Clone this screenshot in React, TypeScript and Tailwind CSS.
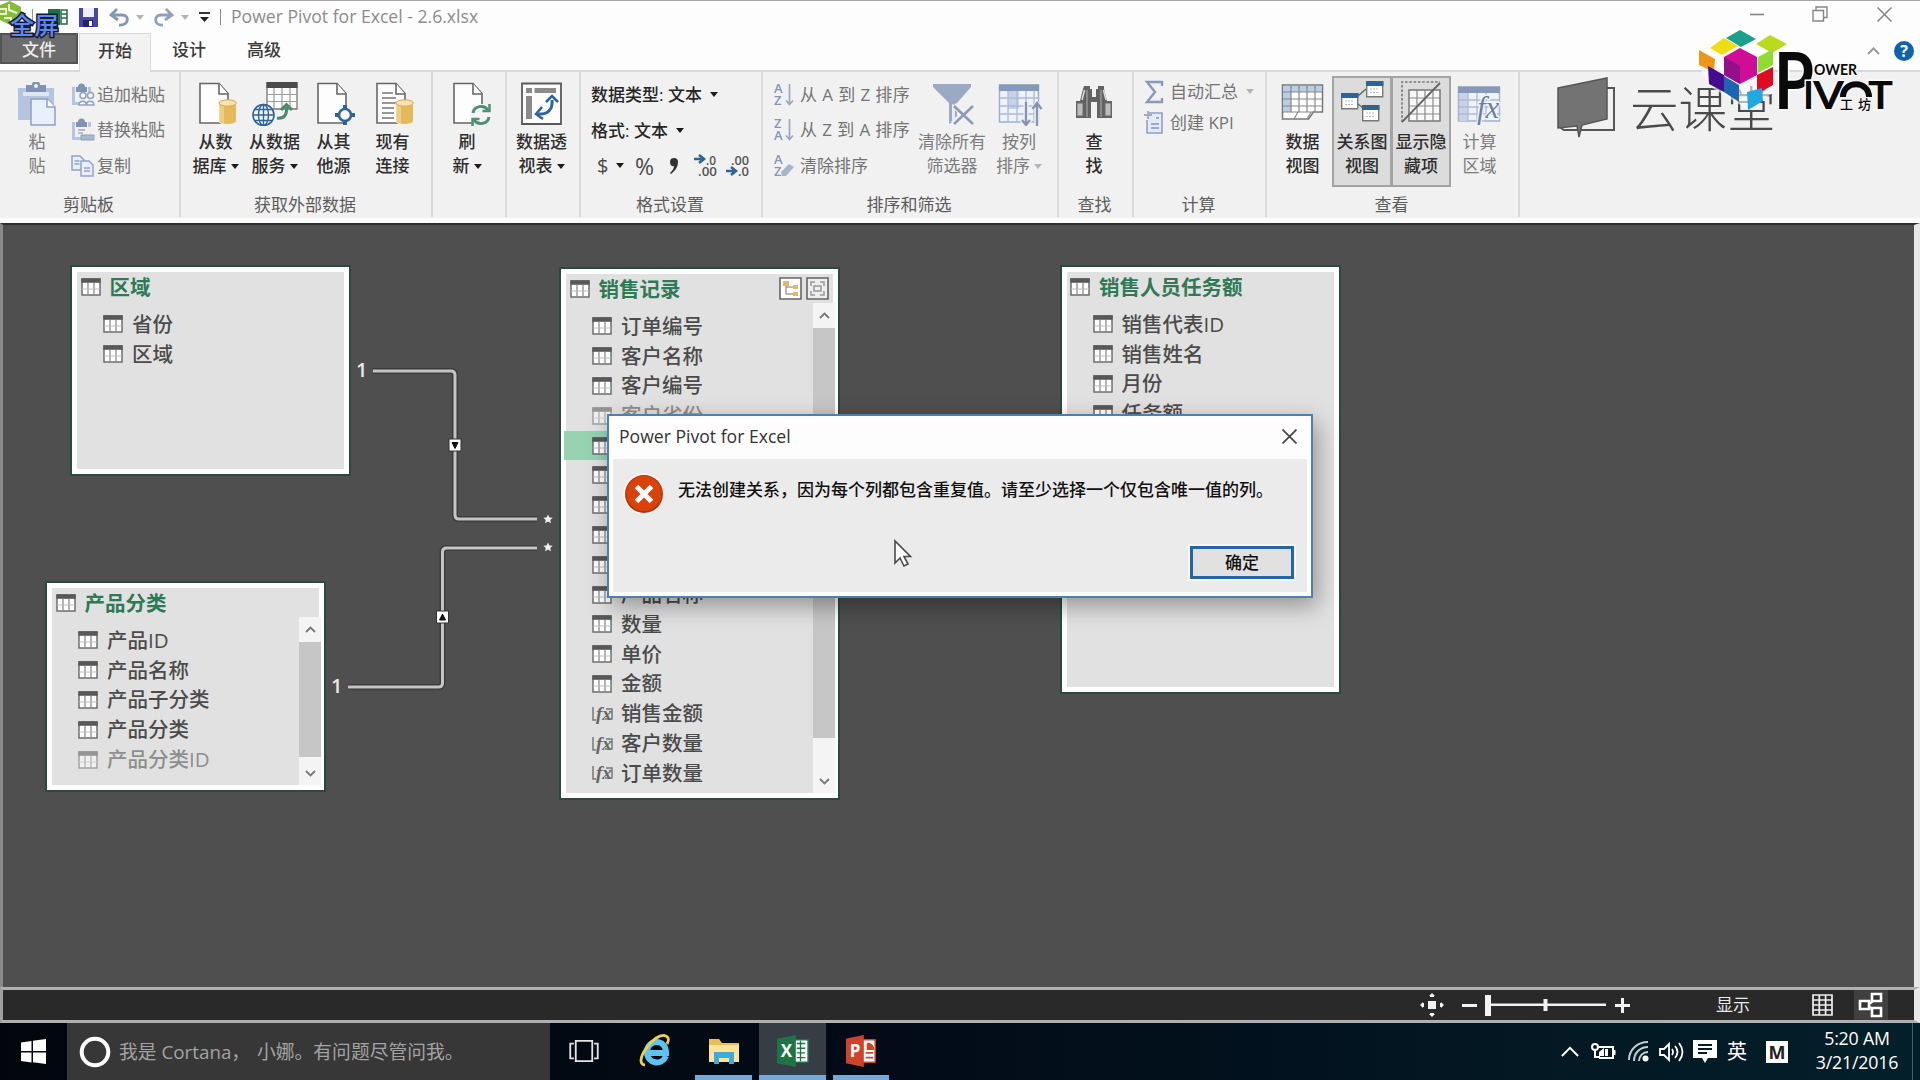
import React from 'react';

const INK = '#4a4a4a';
const BLUE = '#2f6496';

function Caret({ muted = false }: { muted?: boolean }) {
  return (
    <svg width="8" height="5" viewBox="0 0 8 5" className="shrink-0">
      <path d="M0 0h8L4 5z" fill={muted ? '#b4b4b4' : '#1c1c1c'} />
    </svg>
  );
}

/* ---------- ribbon icons ---------- */

function Page({ children, lines = false }: { children?: React.ReactNode; lines?: boolean }) {
  return (
    <svg width="40" height="44" viewBox="0 0 40 44" className="ml-[4px]">
      <path d="M2 1.500h19l9 10V41H2z" fill="#fdfdfd" stroke="#666" strokeWidth="1.600" />
      <path d="M21 1.500V12h9" fill="#fff" stroke="#666" strokeWidth="1.600" />
      {lines && <path d="M7 11h11M7 16h14M7 21h16M7 26h12M7 31h12M7 36h12" stroke="#777" strokeWidth="1.300" />}
      {children}
    </svg>
  );
}

function Cylinder() {
  return (
    <g>
      <path d="M21 21v18c0 4.600 17.500 4.600 17.500 0V21z" fill="#e5b95c" stroke="#f6f6f6" strokeWidth="1" />
      <path d="M22 22v16.500c0 1.500 2 2.600 4 3V24z" fill="#f0cd80" />
      <ellipse cx="29.700" cy="21" rx="8.700" ry="3.200" fill="#f8e3ae" stroke="#d8a94a" />
    </g>
  );
}

function PasteIcon() {
  return (
    <svg width="40" height="44" viewBox="0 0 40 44">
      <path d="M1 6h36v32H1z" fill="#b7c4dd" />
      <path d="M6 10h26v4H6z" fill="#dfe6f2" />
      <path d="M9 3h6a4 4 0 0 1 8 0h6v7H9z" fill="#8093b5" />
      <circle cx="19" cy="4" r="2" fill="#f1f1f1" />
      <path d="M14 17h16l8 8v18H14z" fill="#e8f0fb" stroke="#8da0c2" strokeWidth="1.500" />
      <path d="M30 17v8h8" fill="#fff" stroke="#8da0c2" strokeWidth="1.500" />
    </svg>
  );
}

function SmallPaste({ kind }: { kind: 'append' | 'replace' | 'copy' }) {
  if (kind === 'copy')
    return (
      <svg width="24" height="22" viewBox="0 0 24 22" fill="#e8effa" stroke="#93a4c4" strokeWidth="1.500">
        <path d="M1 1h8l4 4v10H1z" />
        <path d="M10 6h8l4 4v11H10z" />
        <path d="M3.500 6h5M3.500 9h5M13 13h6M13 16h6" />
      </svg>
    );
  return (
    <svg width="24" height="24" viewBox="0 0 24 24">
      <path d="M1 4h3v17H1zM1 19h9v3H1zM17 4h3v5h-3z" fill="#b7c4dd" />
      <path d="M5 4h2a3.500 3.500 0 0 1 7 0h2v5H5z" fill="#8093b5" />
      {kind === 'append' ? (
        <g fill="#f5f8fc" stroke="#8fa0c0" strokeWidth="1.500">
          <circle cx="12" cy="12.500" r="3" />
          <circle cx="19.500" cy="12.500" r="3" />
          <path d="M8 22c0-5 7-5 7.500 0zM15.500 22c0-5 7-5 7.500 0z" />
        </g>
      ) : (
        <g>
          <path d="M7 12h7M7 15h5" stroke="#9aaac8" strokeWidth="1.500" />
          <path d="M10 17h13v5H10z" fill="#aab8d2" stroke="#8fa0c0" />
        </g>
      )}
    </svg>
  );
}

function ServiceIcon() {
  return (
    <svg width="46" height="44" viewBox="0 0 46 44">
      <path d="M15 1h30v26H15z" fill="#fff" stroke="#777" strokeWidth="1.300" />
      <path d="M14.500 0h31v6h-31z" fill="#4b4b4b" />
      <path d="M22 6v20M30 6v20M38 6v20M15 12.500h30M15 19.500h30" stroke="#999" strokeWidth="1.200" />
      <circle cx="11.500" cy="33" r="10.500" fill="#f1f6fb" stroke={BLUE} strokeWidth="1.600" />
      <ellipse cx="11.500" cy="33" rx="5" ry="10.500" fill="none" stroke={BLUE} strokeWidth="1.400" />
      <path d="M1 33h21M11.500 23v20M3 27.500h17M3 38.500h17" stroke={BLUE} strokeWidth="1.400" />
      <path d="M25 36c8 1 10-4 9.500-11M29 28l5.500-5.500 5.500 5.500" fill="none" stroke="#4a8a6a" strokeWidth="3" />
    </svg>
  );
}

function RefreshArrows() {
  return (
    <g fill="none" stroke="#4d9272" strokeWidth="3">
      <circle cx="29" cy="33" r="11" fill="#f5f5f5" stroke="none" />
      <path d="M21 31c1-7 11-9 15-3M37 35c-1 7-11 9-15 3" />
      <path d="M37.500 22v7h-7M20.500 44v-7h7" strokeWidth="2.500" />
    </g>
  );
}

function PivotIcon() {
  return (
    <svg width="41" height="44" viewBox="0 0 41 44">
      <path d="M1 1.500h39V42H1z" fill="#fcfcfc" stroke="#5a5a5a" strokeWidth="1.800" />
      <path d="M5 6h6v5H5zM13.500 6H35v5H13.500zM5 14h6v23H5z" fill="#8a8a8a" />
      <path d="M17 32c10 1 15-5 14-14" fill="none" stroke={BLUE} strokeWidth="3" />
      <path d="M25 20l6-6 6 6M21 25l-6 7 7 5" fill="none" stroke={BLUE} strokeWidth="2.500" />
    </svg>
  );
}

function SortIcon({ top, bottom }: { top: string; bottom: string }) {
  return (
    <svg width="21" height="28" viewBox="0 0 21 28">
      <text x="0" y="12" fontSize="13" fontWeight="600" fill="#8496b5" fontFamily="Open Sans, sans-serif">{top}</text>
      <text x="0" y="24" fontSize="13" fontWeight="600" fill="#8496b5" fontFamily="Open Sans, sans-serif">{bottom}</text>
      <path d="M15.500 3v20M12 19.500l3.500 4 3.500-4" fill="none" stroke="#9aa8c0" strokeWidth="1.700" />
    </svg>
  );
}

function ClearSortIcon() {
  return (
    <svg width="21" height="28" viewBox="0 0 21 28">
      <text x="0" y="12" fontSize="13" fontWeight="600" fill="#8496b5" fontFamily="Open Sans, sans-serif">A</text>
      <text x="0" y="24" fontSize="13" fontWeight="600" fill="#8496b5" fontFamily="Open Sans, sans-serif">Z</text>
      <path d="M7 20l8-8 5 3-8 9H8z" fill="#a6b4cd" />
    </svg>
  );
}

function FilterClearIcon() {
  return (
    <svg width="44" height="44" viewBox="0 0 44 44" className="ml-1">
      <path d="M1 2h38v3L25 21v17l-8 4V21L1 5z" fill="#9aa9c4" />
      <path d="M20 22l3 1v13l-3 3z" fill="#e6edf7" />
      <path d="M22 23l20 20M41 23L21 42" stroke="#f1f1f1" strokeWidth="6" />
      <path d="M22 24l19 18M41 24L22 42" stroke="#8d9bb6" strokeWidth="2.600" />
    </svg>
  );
}

function SortByColIcon() {
  return (
    <svg width="46" height="44" viewBox="0 0 46 44" className="ml-1">
      <path d="M1.500 3h39v37h-39z" fill="#eef3fb" stroke="#a0aec9" strokeWidth="1.500" />
      <path d="M1 2.500h40V9H1z" fill="#8799ba" />
      <path d="M10 9h11v18H10z" fill="#c6d2e8" />
      <path d="M10 9v31M19 9v31M28 9v31M36 9v31M2 16h38M2 24h38M2 32h38" stroke="#aebbd4" strokeWidth="1.300" />
      <path d="M28 20v23M24 38l4 5 4-5M39 44V22M35 27l4-5 4 5" fill="none" stroke="#f1f1f1" strokeWidth="5" />
      <path d="M28 20v22M24 38l4 5 4-5M39 44V21M34.500 27l4.500-6 4.500 6" fill="none" stroke="#8593ae" strokeWidth="2.300" />
    </svg>
  );
}

function BinocularsIcon() {
  return (
    <svg width="38" height="44" viewBox="0 0 38 44" className="-mt-0.5">
      <path d="M9 6h6v3h2v8h4V9h2V6h6v3l3 12h5v17H22V22h-6v16H1V21h4L8 9z" fill="#626262" />
      <path d="M2 23h6v13H2zM30 23h6v13h-6z" fill="#bdbdbd" stroke="#6c6c6c" />
      <path d="M9.500 10L7 20M28.500 10L31 20" stroke="#ddd" strokeWidth="1.500" />
      <path d="M12 10v27M26 10v27" stroke="#8a8a8a" strokeWidth="2" />
    </svg>
  );
}

function DataViewIcon() {
  return (
    <svg width="43" height="44" viewBox="0 0 43 44">
      <path d="M1.500 3h40v27h-9l-5 7h-26z" fill="#fff" stroke="#777" strokeWidth="1.500" />
      <path d="M2 4h39v6H2zM2 4h8v26H2z" fill="#b9cfe8" />
      <path d="M10 4v26M18 4v26M26 4v26M34 4v26M2 10h39M2 17h39M2 24h39M2 30h31M13 37l4-7M26 37l4-7" stroke="#888" strokeWidth="1.200" />
    </svg>
  );
}

function MiniTable({ x, y }: { x: number; y: number }) {
  return (
    <g transform={`translate(${x} ${y})`}>
      <path d="M.7.7h16v15h-16z" fill="#fff" stroke="#777" strokeWidth="1.400" />
      <path d="M0 0h17.400v5H0z" fill={BLUE} />
      <path d="M4 8h9M4 11.500h9" stroke="#bbb" strokeDasharray="2 1" />
    </g>
  );
}

function DiagramIcon() {
  return (
    <svg width="44" height="44" viewBox="0 0 44 44" className="-mt-0.5">
      <path d="M18 16l8-7M18 24l5 4" stroke="#666" strokeWidth="1.500" />
      <MiniTable x={26} y={1} />
      <MiniTable x={1} y={13} />
      <MiniTable x={22} y={25} />
    </svg>
  );
}

function HiddenIcon() {
  return (
    <svg width="42" height="44" viewBox="0 0 42 44" className="-mt-0.5">
      <path d="M2 42V2h38" fill="none" stroke="#777" strokeWidth="1.600" strokeDasharray="2.500 1.800" />
      <path d="M9 10h31v31H9z" fill="#f8f8f8" stroke="#777" strokeWidth="1.500" />
      <path d="M17 10v31M25 10v31M33 10v31M9 18h31M9 26h31M9 34h31" stroke="#8a8a8a" strokeWidth="1.200" />
      <path d="M2 42L40 3" stroke="#666" strokeWidth="1.800" />
    </svg>
  );
}

function CalcAreaIcon() {
  return (
    <svg width="46" height="44" viewBox="0 0 46 44">
      <path d="M1.500 5h41v34h-41z" fill="#eef3fb" stroke="#a5b2cc" strokeWidth="1.400" />
      <path d="M1 4.500h42V11H1z" fill="#8799ba" />
      <path d="M2 11h9v28H2z" fill="#c6d2e8" />
      <path d="M11 11v28M20 11v28M29 11v28M2 18h41M2 25h41M2 32h41" stroke="#aebbd4" strokeWidth="1.300" />
      <text x="20" y="36" fontSize="31" fontStyle="italic" fill="#6d7f9f" stroke="#f4f6fa" strokeWidth="2.500" paintOrder="stroke" fontFamily="Liberation Serif, serif">fx</text>
    </svg>
  );
}

function DecimalIcon({ left }: { left: boolean }) {
  return (
    <svg width="24" height="26" viewBox="0 0 24 26">
      <g fontSize="13" fontWeight="600" fill="#555" fontFamily="Open Sans, sans-serif">
        <text x={left ? 12 : 5} y="12" textLength={left ? 10 : 18} lengthAdjust="spacingAndGlyphs">{left ? '.0' : '.00'}</text>
        <text x={left ? 4 : 12} y="23" textLength={left ? 19 : 11} lengthAdjust="spacingAndGlyphs">{left ? '.00' : '.0'}</text>
      </g>
      <path d={left ? 'M0 6h9M5 2l5 4-5 4' : 'M0 18h9M5 14l5 4-5 4'} fill="none" stroke={BLUE} strokeWidth="2.600" />
    </svg>
  );
}

/* ---------- ribbon pieces ---------- */

function Group({ width, label, children }: { width: string; label?: string; children: React.ReactNode }) {
  return (
    <section className={`${width} flex h-[145px] shrink-0 flex-col border-r-2 border-[#dadada]`}>
      <div className="flex h-[121px] pt-[4px]">{children}</div>
      <div className="h-6 pr-0.5 text-center text-[17px] leading-6 text-[#5c5c5c]">{label}</div>
    </section>
  );
}

interface BigProps {
  icon: React.ReactNode;
  a: string;
  b: string;
  caret?: boolean;
  muted?: boolean;
  active?: boolean;
  width?: string;
}

function Big({ icon, a, b, caret, muted, active, width = 'w-[59px]' }: BigProps) {
  return (
    <button
      className={`${width} flex h-[111px] shrink-0 flex-col items-center border-2 pt-1 text-[17px] leading-6 ${
        active ? '-mr-px border-[#a3a3a3] bg-[#dcdcdc]' : 'border-transparent'
      } ${muted ? 'text-[#7c7c7c]' : 'font-medium text-[#2e2e2e]'}`}
    >
      <span className="flex h-[48px] items-start">{icon}</span>
      <span className="whitespace-nowrap">{a}</span>
      <span className="flex items-center gap-1 whitespace-nowrap">
        {b}
        {caret && <Caret muted={muted} />}
      </span>
    </button>
  );
}

function Small({ icon, text, tight }: { icon: React.ReactNode; text: string; tight?: boolean }) {
  return (
    <div className={`flex h-[35.500px] items-center text-[17px] leading-6 whitespace-nowrap text-[#747474] ${tight ? '' : 'tracking-[0.4px]'}`}>
      <span className="mr-[2px] flex w-6 justify-start">{icon}</span>
      {text}
    </div>
  );
}

function Ribbon() {
  return (
    <div className="flex h-[153px] border-t-2 border-b-[5px] border-t-[#d9d9d9] border-b-[#fcfcfc] bg-[#f1f1f1]">
      <Group width="w-[181px]" label="剪贴板">
        <Big width="ml-1.5 w-[62px]" icon={<PasteIcon />} a="粘" b="贴" muted />
        <div className="ml-[3px] pt-px">
          <Small icon={<SmallPaste kind="append" />} text="追加粘贴" tight />
          <Small icon={<SmallPaste kind="replace" />} text="替换粘贴" tight />
          <Small icon={<SmallPaste kind="copy" />} text="复制" tight />
        </div>
      </Group>
      <Group width="w-[252px]" label="获取外部数据">
        <div className="w-[5px]" />
        <Big icon={<Page><Cylinder /></Page>} a="从数" b="据库" caret />
        <Big icon={<ServiceIcon />} a="从数据" b="服务" caret />
        <Big
          icon={
            <Page>
              <path d="M29 23v20M19 33h20" stroke={BLUE} strokeWidth="4" />
              <circle cx="29" cy="33" r="6" fill="#fff" stroke={BLUE} strokeWidth="2.500" />
            </Page>
          }
          a="从其"
          b="他源"
        />
        <Big icon={<Page lines><Cylinder /></Page>} a="现有" b="连接" />
      </Group>
      <Group width="w-[74px]">
        <Big width="ml-[3px] w-[62px]" icon={<span className="ml-1.5"><Page><RefreshArrows /></Page></span>} a="刷" b="新" caret />
      </Group>
      <Group width="w-[74px]">
        <Big width="ml-[3px] w-[63px]" icon={<PivotIcon />} a="数据透" b="视表" caret />
      </Group>
      <Group width="w-[182px]" label="格式设置">
        <div className="ml-2.5 pt-px text-[17px] text-[#262626]">
          <div className="flex h-[35.500px] items-center gap-2 font-medium">数据类型: 文本 <Caret /></div>
          <div className="flex h-[35.500px] items-center gap-2 font-medium">格式: 文本 <Caret /></div>
          <div className="flex h-[35.500px] items-center text-[20px] text-[#4a4a4a]">
            <span className="ml-1.5 w-[19px]">$</span>
            <Caret />
            <span className="ml-[11px] w-[33px] text-[23px]">%</span>
            <svg width="12" height="18" viewBox="0 0 12 18" className="mr-3.5">
              <path d="M2 5a4 4 0 1 1 8 0c0 5-3 9-7 12l-1-1c3-3 4-5 4-7-2 1-4-1-4-4z" fill="#333" />
            </svg>
            <DecimalIcon left />
            <span className="w-2" />
            <DecimalIcon left={false} />
          </div>
        </div>
      </Group>
      <Group width="w-[296px]" label="排序和筛选">
        <div className="ml-[11px] w-[142px] shrink-0 pt-px">
          <Small icon={<SortIcon top="A" bottom="Z" />} text="从 A 到 Z 排序" />
          <Small icon={<SortIcon top="Z" bottom="A" />} text="从 Z 到 A 排序" />
          <Small icon={<ClearSortIcon />} text="清除排序" tight />
        </div>
        <Big width="w-[72px]" icon={<FilterClearIcon />} a="清除所有" b="筛选器" muted />
        <Big width="w-[62px]" icon={<SortByColIcon />} a="按列" b="排序" caret muted />
      </Group>
      <Group width="w-[75px]" label="查找">
        <Big width="ml-[3px] w-[64px]" icon={<BinocularsIcon />} a="查" b="找" />
      </Group>
      <Group width="w-[133px]" label="计算">
        <div className="ml-2.5 text-[17px] text-[#747474]">
          <div className="flex h-[31px] items-center">
            <svg width="20" height="24" viewBox="0 0 20 24" className="mr-1.5">
              <path d="M18 6V2H3l8 10-8 10h15v-4" fill="none" stroke="#8a99b8" strokeWidth="2.400" />
            </svg>
            <span className="mr-2">自动汇总</span>
            <Caret muted />
          </div>
          <div className="flex h-[31px] items-center">
            <svg width="20" height="24" viewBox="0 0 20 24" className="mr-1.5">
              <path d="M5 2h13v20H3V9" fill="#e3ebf7" stroke="#8fa0c0" strokeWidth="1.600" />
              <path d="M4 0v8M0 4h8M7 13h8M7 17h8M12 7h3" stroke="#9aaac8" strokeWidth="1.800" />
            </svg>
            创建 KPI
          </div>
        </div>
      </Group>
      <Group width="w-[253px]" label="查看">
        <div className="w-[6px]" />
        <Big icon={<DataViewIcon />} a="数据" b="视图" />
        <Big width="w-[60px]" icon={<DiagramIcon />} a="关系图" b="视图" active />
        <Big width="w-[60px]" icon={<HiddenIcon />} a="显示隐" b="藏项" active />
        <Big icon={<CalcAreaIcon />} a="计算" b="区域" muted />
      </Group>
    </div>
  );
}

/* ---------- title bar and tabs ---------- */

function TitleBar() {
  return (
    <header className="flex h-[33px] items-center border-t border-[#a8a8a8] bg-[#fdfdfd]">
      <svg width="24" height="24" viewBox="0 0 24 24" className="-mt-2">
        <path d="M0 4l10-4 11 6v12l-11 6-10-5z" fill="#84bd35" />
        <path d="M0 8h6v5H0M9 3v6l8 3M4 17h7v5" fill="none" stroke="#e9f6cf" strokeWidth="2" />
      </svg>
      <div className="ml-2 h-4 w-px bg-[#999]" />
      <svg width="20" height="18" viewBox="0 0 20 18" className="ml-[15px]">
        <path d="M0 1h12v16H0z" fill="#1e6f45" />
        <path d="M13 2h6v14h-6zM13 6h6M13 10h6" fill="#fff" stroke="#1e6f45" strokeWidth="1.500" />
      </svg>
      <svg width="21" height="21" viewBox="0 0 21 21" className="ml-[10px]">
        <path d="M1 1h19v19H1z" fill="#4646a4" />
        <path d="M5 1h11v9H5z" fill="#eef" />
        <path d="M5 13h10v7H5z" fill="#25255f" />
        <path d="M11 14h3v5h-3z" fill="#fff" />
      </svg>
      <svg width="21" height="19" viewBox="0 0 21 19" className="ml-[10px]" fill="none" stroke="#8496b8" strokeWidth="2.800">
        <path d="M8 1L2 7l7 5M3 7h10c8 0 7 11-3 10" />
      </svg>
      <span className="ml-[6px]"><Caret muted /></span>
      <svg width="22" height="19" viewBox="0 0 22 19" className="ml-[9px]" fill="none" stroke="#8fa0be" strokeWidth="2.800">
        <path d="M13 1l6 6-7 5M18 7H8C0 7 1 18 10 17" />
      </svg>
      <span className="ml-[6px]"><Caret muted /></span>
      <svg width="11" height="11" viewBox="0 0 11 11" className="ml-[10px]">
        <path d="M0 1h11" stroke="#333" strokeWidth="2" />
        <path d="M1 5h9l-4.500 5z" fill="#222" />
      </svg>
      <div className="ml-[10px] h-4 w-px bg-[#888]" />
      <div className="ml-[10px] pb-0.5 text-[17.600px] leading-6 whitespace-nowrap text-[#8c8c8c]">Power Pivot for Excel - 2.6.xlsx</div>
      <div className="mr-[28px] -mt-1.5 ml-auto flex items-center text-[#858585]">
        <svg width="14" height="14" viewBox="0 0 14 14" className="mr-[48px]"><path d="M0 7.500h14" stroke="currentColor" strokeWidth="1.600" /></svg>
        <svg width="16" height="16" viewBox="0 0 16 16" className="mr-[49px]" fill="none" stroke="currentColor" strokeWidth="1.400">
          <path d="M1 4.500h10.500V15H1zM4 4V1h11v10.500h-3" />
        </svg>
        <svg width="15" height="15" viewBox="0 0 15 15"><path d="M.5.5l14 14M14.500.5l-14 14" stroke="currentColor" strokeWidth="1.500" /></svg>
      </div>
    </header>
  );
}

function Tabs() {
  return (
    <nav className="flex h-[37px] bg-[#fdfdfd] text-[17px] leading-[34px] font-medium text-[#3b3b3b]">
      <div className="h-[31px] w-[78px] border-2 border-[#545454] bg-[#6c6c6c] text-center leading-[29px] text-[#ededed]">文件</div>
      <div className="z-10 ml-px h-[39px] w-[72px] border border-b-0 border-[#d9d9d9] bg-[#f2f2f2] text-center leading-[33px]">开始</div>
      <div className="ml-[21px] w-[34px]">设计</div>
      <div className="ml-[41px] w-[34px]">高级</div>
      <div className="mr-[6px] ml-auto flex h-9 items-center gap-[14px]">
        <svg width="13" height="8" viewBox="0 0 13 8"><path d="M1 7l5.500-5.500L12 7" fill="none" stroke="#999" strokeWidth="2" /></svg>
        <span className="flex size-[20px] items-center justify-center rounded-full bg-[#0f62ae] text-[16px] leading-none font-bold text-white">?</span>
      </div>
    </nav>
  );
}

/* ---------- diagram ---------- */

function TableGlyph() {
  return (
    <svg width="20" height="18" viewBox="0 0 20 18" className="shrink-0">
      <path d="M1 1h18v16H1z" fill="#fff" stroke="#6e6e6e" strokeWidth="1.500" />
      <path d="M.3.300h19.400v4.500H.3z" fill="#585858" />
      <path d="M7 5v12M13 5v12" stroke="#8c8c8c" strokeWidth="1.300" />
      <path d="M1 11h18" stroke="#bdbdbd" />
    </svg>
  );
}

function FxGlyph() {
  return (
    <svg width="22" height="22" viewBox="0 0 22 22" className="shrink-0">
      <path d="M1 4v13h3M14 6h6v10h-7" fill="none" stroke="#777" strokeWidth="1.500" />
      <text x="4" y="17" fontSize="19" fontStyle="italic" fontWeight="700" fill="#666" fontFamily="Liberation Serif, serif">fx</text>
    </svg>
  );
}

interface Field {
  name: string;
  kind?: 'measure';
  hidden?: boolean;
  selected?: boolean;
}

interface BoxProps {
  place: string;
  title: string;
  fields: Field[];
  thumb?: string;
  tools?: boolean;
}

function Chevron({ up = false }: { up?: boolean }) {
  return (
    <svg width="11" height="7" viewBox="0 0 11 7">
      <path d={up ? 'M1 6l4.500-4.500L10 6' : 'M1 1l4.500 4.500L10 1'} fill="none" stroke="#777" strokeWidth="1.800" />
    </svg>
  );
}

function TableBox({ place, title, fields, thumb, tools }: BoxProps) {
  return (
    <div className={`${place} absolute w-[277px] overflow-hidden border-[3px] border-white bg-[#e1e1e1] shadow-[inset_0_0_0_2px_#fff] outline-2 outline-[#2b4a3e]`}>
      <div className="flex h-[33px] items-center pl-[5.500px]">
        <TableGlyph />
        <span className="ml-[9px] text-[20.500px] leading-[30px] font-bold text-[#2e7a55]">{title}</span>
        {tools && (
          <span className="mr-[6px] ml-auto flex gap-1">
            <svg width="23" height="23" viewBox="0 0 23 23">
              <path d="M1 1h21v21H1z" fill="#fff" stroke="#666" strokeWidth="1.600" />
              <path d="M4 4h6v5H4zM14 8h5v4h-5zM14 15h5v4h-5z" fill="#e8b765" />
              <path d="M7 9v8h7M7 10h7" fill="none" stroke="#777" />
            </svg>
            <svg width="23" height="23" viewBox="0 0 23 23" fill="none" stroke="#999">
              <path d="M1 1h21v21H1z" fill="#eee" stroke="#666" strokeWidth="1.600" />
              <path d="M5 9V5h4M14 5h4v4M18 14v4h-4M9 18H5v-4" strokeWidth="1.500" />
              <path d="M8 9h7v5H8z" strokeWidth="1.500" />
            </svg>
          </span>
        )}
      </div>
      <div className="pt-[6.500px]">
        {fields.map((f, i) => (
          <div
            key={i}
            className={`flex h-[29.800px] items-center pl-[28px] ${f.selected ? 'bg-[#97d3b0]' : ''} ${f.hidden ? 'opacity-55' : ''}`}
          >
            {f.kind ? <FxGlyph /> : <TableGlyph />}
            <span className={`text-[20.500px] leading-[29px] font-medium text-[#4b4b4b] ${f.kind ? 'ml-[7px]' : 'ml-[9px]'}`}>{f.name}</span>
          </div>
        ))}
      </div>
      {thumb && (
        <div className="absolute top-[31px] right-0 bottom-0.5 flex w-[22px] flex-col bg-[#f4f4f4]">
          <div className="flex h-[25px] items-center justify-center"><Chevron up /></div>
          <div className={`${thumb} bg-[#c6c6c6]`} />
          <div className="mt-auto flex h-[24px] items-center justify-center"><Chevron /></div>
        </div>
      )}
    </div>
  );
}

function Relations() {
  return (
    <svg width="580" height="760" viewBox="0 223 580 760" className="absolute top-0 left-0" fill="none">
      <g stroke="#3c3c3c" strokeWidth="6">
        <path d="M373 371h78q4 0 4 4v140q0 4 4 4h78M348 687h90.500q4 0 4-4V552q0-4 4-4H537" />
      </g>
      <g stroke="#c4c4c4" strokeWidth="3">
        <path d="M373 371h78q4 0 4 4v140q0 4 4 4h78M348 687h90.500q4 0 4-4V552q0-4 4-4H537" />
      </g>
      <g fill="#fff">
        <path d="M449 439h12v12h-12zM436.500 611h12v12h-12z" stroke="#333" />
        <path d="M452 442.500h6l-3 6zM439.500 620h6l-3-6z" fill="#111" stroke="#111" />
        <g fill="#e8e8e8" fontFamily="Open Sans, sans-serif" fontSize="20" fontWeight="600">
          <text x="356" y="377">1</text>
          <text x="331" y="693">1</text>
        </g>
        <path d="M548 514.500l1.400 3 3.300.3-2.500 2.200.8 3.300-3-1.800-3 1.800.8-3.300-2.500-2.200 3.300-.3zM548 542.500l1.400 3 3.300.3-2.500 2.200.8 3.300-3-1.800-3 1.800.8-3.300-2.500-2.200 3.300-.3z" fill="#f2f2f2" />
      </g>
    </svg>
  );
}

const salesFields: Field[] = [
  { name: '订单编号' },
  { name: '客户名称' },
  { name: '客户编号' },
  { name: '客户省份', hidden: true },
  { name: '', selected: true },
  { name: '' },
  { name: '' },
  { name: '' },
  { name: '' },
  { name: '产品名称' },
  { name: '数量' },
  { name: '单价' },
  { name: '金额' },
  { name: '销售金额', kind: 'measure' },
  { name: '客户数量', kind: 'measure' },
  { name: '订单数量', kind: 'measure' },
];

function Dialog() {
  return (
    <div className="absolute top-[191px] left-[607px] flex h-[184px] w-[706px] flex-col border-2 border-[#4a80b4] bg-[#fdfdfd] shadow-[4px_8px_22px_rgba(0,0,0,0.35)]">
      <div className="flex h-[43px] items-center pr-[14px] pb-[3px] pl-[10px]">
        <span className="text-[17.600px] leading-6 text-[#333]">Power Pivot for Excel</span>
        <svg width="15" height="15" viewBox="0 0 15 15" className="ml-auto"><path d="M.5.5l14 14M14.500.5l-14 14" stroke="#444" strokeWidth="1.700" /></svg>
      </div>
      <div className="mx-1 mb-1 flex flex-1 flex-col bg-[#ebebeb]">
        <div className="flex pt-[14px] pl-[10px]">
          <svg width="42" height="42" viewBox="0 0 42 42">
            <circle cx="21" cy="21" r="20.500" fill="#f8f8f8" />
            <circle cx="21" cy="21" r="19" fill="#b93305" />
            <circle cx="21" cy="20.500" r="17.500" fill="#d9430b" />
            <path d="M13.500 13.500l15 15M28.500 13.500l-15 15" stroke="#fff" strokeWidth="5" />
          </svg>
          <p className="mt-[5px] ml-[13px] text-[17px] leading-6 font-medium whitespace-nowrap text-[#111]">
            无法创建关系，因为每个列都包含重复值。请至少选择一个仅包含唯一值的列。
          </p>
        </div>
        <button className="mt-[31px] mr-[13px] h-[33px] w-[104px] self-end border-[3px] border-[#2465a5] bg-[#e1e1e1] text-[17px] leading-[26px] font-medium text-[#111] outline-2 outline-[#f7f7f7]">
          确定
        </button>
      </div>
    </div>
  );
}

function Cursor() {
  return (
    <svg width="20" height="30" viewBox="0 0 20 30" className="absolute top-[316px] left-[893px]">
      <path d="M2 2v22l5-5 4 8 4-2-4-7.500h6.500z" fill="#fff" stroke="#4a4a4a" strokeWidth="1.600" />
    </svg>
  );
}

function Canvas() {
  return (
    <main className="relative h-[764px] border-t-2 border-r-[6px] border-l-[3px] border-t-[#303030] border-r-[#e8e8e8] border-l-[#8a8a8a] bg-[#4f4f4f]">
      <div className="absolute -top-0.5 -left-[3px] h-[764px] w-[1910px]">
        <Relations />
        <TableBox place="left-[72px] top-[44px] h-[207px]" title="区域" fields={[{ name: '省份' }, { name: '区域' }]} />
        <TableBox
          place="left-[47px] top-[360px] h-[207px]"
          title="产品分类"
          fields={[{ name: '产品ID' }, { name: '产品名称' }, { name: '产品子分类' }, { name: '产品分类' }, { name: '产品分类ID', hidden: true }]}
          thumb="h-[115px]"
        />
        <TableBox place="left-[561px] top-[46px] h-[529px]" title="销售记录" fields={salesFields} thumb="h-[410px]" tools />
        <TableBox
          place="left-[1061.500px] top-[44px] h-[425px]"
          title="销售人员任务额"
          fields={[{ name: '销售代表ID' }, { name: '销售姓名' }, { name: '月份' }, { name: '任务额' }]}
        />
        <Dialog />
        <Cursor />
      </div>
    </main>
  );
}

/* ---------- status bar and taskbar ---------- */

function StatusBar() {
  return (
    <div className="flex h-[36px] items-center border-y-[3px] border-r-[6px] border-l-[3px] border-y-[#b0b0b0] border-r-[#e8e8e8] border-l-[#a0a0a0] bg-[#292929] text-white">
      <svg width="26" height="24" viewBox="0 0 26 24" className="ml-[1416px]" fill="#f2f2f2">
        <path d="M9 8h8v8H9zM10 3l3-3 3 3zM10 21l3 3 3-3zM4 9l-3 3 3 3zM22 9l3 3-3 3z" />
        <path d="M3 10h2v4H3zM21 10h2v4h-2zM11 2h4v2h-4zM11 20h4v2h-4z" />
      </svg>
      <svg width="170" height="24" viewBox="0 0 170 24" className="ml-[16px]" fill="#f2f2f2">
        <path d="M1 11h15v3H1zM24 2h6v21h-6zM30 10.500h115v2.500H30zM82.500 6h4v12h-4zM154 11h15v3h-15zM160 5h3v15h-3z" />
      </svg>
      <span className="ml-[85px] text-[17px] leading-6 text-[#e8e8e8]">显示</span>
      <svg width="21" height="22" viewBox="0 0 21 22" className="ml-[62px]" fill="none" stroke="#f0f0f0" strokeWidth="1.700">
        <path d="M1 1h19v20H1zM7.300 1v20M13.600 1v20M1 6h19M1 11h19M1 16h19" />
      </svg>
      <span className="ml-[21px] flex h-[30px] w-[34px] items-center justify-center bg-[#404040]">
        <svg width="26" height="26" viewBox="0 0 26 26" fill="#333" stroke="#fff" strokeWidth="2.600">
          <path d="M2 9h9v8H2zM14 2h9v7h-9zM14 16h9v8h-9zM11 12l4-3M11 15l4 2" />
        </svg>
      </span>
    </div>
  );
}

function AppSlot({ children, width, active, open }: { children: React.ReactNode; width: string; active?: boolean; open?: boolean }) {
  return (
    <div className={`${width} flex h-full flex-col ${active ? 'bg-[#363d44]' : ''}`}>
      <div className="flex flex-1 items-center justify-center pt-1">{children}</div>
      <div className={`h-[5px] ${open ? 'bg-[#76a9d5]' : ''}`} />
    </div>
  );
}

function Taskbar() {
  return (
    <footer className="flex h-[57px] items-stretch bg-linear-to-r from-[#02060b] via-[#020c18] to-[#03202a] text-white">
      <div className="flex w-[67px] items-center justify-center">
        <svg width="25" height="25" viewBox="0 0 25 25" fill="#fff">
          <path d="M0 3.500l10.500-1.500v10H0zM12 1.800L25 0v12H12zM0 13.500h10.500v10L0 22zM12 13.500h13V25l-13-1.800z" />
        </svg>
      </div>
      <div className="flex w-[483px] items-center bg-[#373737] pl-[12px]">
        <svg width="32" height="32" viewBox="0 0 32 32"><circle cx="16" cy="16" r="13.300" fill="none" stroke="#fff" strokeWidth="4" /></svg>
        <span className="ml-[8px] flex text-[18.800px] leading-6 whitespace-nowrap text-[#a3a3a3]">
          <span className="w-[138px]">我是 Cortana，</span>
          <span>小娜。有问题尽管问我。</span>
        </span>
      </div>
      <AppSlot width="w-[68px]">
        <svg width="30" height="22" viewBox="0 0 32 24" fill="none" stroke="#e5e5e5" strokeWidth="2">
          <path d="M7 1h18v22H7zM5 4H1v16h4M27 4h4v16h-4" />
        </svg>
      </AppSlot>
      <AppSlot width="w-[74px]">
        <svg width="34" height="34" viewBox="0 0 34 34" fill="none">
          <path d="M28 22c-4 10-19 8-19-4C9 5 28 4 28 19H11" stroke="#5cc3f2" strokeWidth="6" />
          <path d="M7 31C-6 30 16-3 28 2c4 2 2 6 1 8" stroke="#f2cf4a" strokeWidth="2.800" />
        </svg>
      </AppSlot>
      <div className="w-[3px]" />
      <AppSlot width="w-[57px]" open>
        <svg width="32" height="28" viewBox="0 0 32 28">
          <path d="M1 2h10l3 4h17v19H1z" fill="#e9bf55" />
          <path d="M1 8h30v17H1z" fill="#fbe495" />
          <path d="M6 27V15h20v12h-5v-6H11v6z" fill="#3fa9dc" />
        </svg>
      </AppSlot>
      <div className="w-[7px]" />
      <AppSlot width="w-[67px]" active open>
        <svg width="34" height="32" viewBox="0 0 36 34">
          <path d="M17 5h17v24H17z" fill="#fff" stroke="#1f7446" strokeWidth="1.500" />
          <path d="M22 9h9M22 14h9M22 19h9M22 24h9M26 6v22" stroke="#1f7446" strokeWidth="1.500" />
          <path d="M1 4l20-4v34L1 30z" fill="#1f7446" />
          <text x="5" y="23" fontSize="18" fontWeight="700" fill="#fff" fontFamily="Open Sans, sans-serif">X</text>
        </svg>
      </AppSlot>
      <div className="w-[7px]" />
      <AppSlot width="w-[56px]" open>
        <svg width="32" height="32" viewBox="0 0 34 34">
          <path d="M17 5h15v24H17z" fill="#fff" stroke="#d0432a" strokeWidth="1.500" />
          <path d="M22 19h8M22 24h8M24 9v6h6a6 6 0 0 0-6-6" fill="#d0432a" stroke="#d0432a" strokeWidth="2" />
          <path d="M1 4l19-4v34L1 30z" fill="#d0432a" />
          <text x="5" y="23" fontSize="18" fontWeight="700" fill="#fff" fontFamily="Open Sans, sans-serif">P</text>
        </svg>
      </AppSlot>
      <div className="ml-auto flex items-center">
        <svg width="18" height="11" viewBox="0 0 20 12" fill="none" stroke="#fff" strokeWidth="2.200"><path d="M1 11l9-9 9 9" /></svg>
        <svg width="25" height="20" viewBox="0 0 25 20" className="ml-[12px]" fill="none" stroke="#fff" strokeWidth="2">
          <path d="M8 5h14v11H8M23.500 8v5" />
          <path d="M8 10l5-4v8H8zM14 7h3v7h-3z" fill="#fff" stroke="none" />
          <circle cx="4" cy="5" r="3" />
          <path d="M4 8v7h5" />
        </svg>
        <svg width="21" height="21" viewBox="0 0 21 21" className="ml-[12px]" fill="none" stroke="#c5ccd1" strokeWidth="2">
          <path d="M1 19C1 9 9 1 20 1M6 20C6 12 12 6 20 6M11 20c0-5 4-9 9-9" />
          <circle cx="17.500" cy="17.500" r="3" fill="#fff" stroke="none" />
        </svg>
        <svg width="25" height="22" viewBox="0 0 25 22" className="ml-[10px]" fill="none" stroke="#fff" strokeWidth="1.800">
          <path d="M1 8h4l5-5v16l-5-5H1zM13 8q2 3 0 6M16 5q5 6 0 12M20 2q7 9 0 18" />
        </svg>
        <svg width="24" height="24" viewBox="0 0 24 24" className="ml-[9px]">
          <path d="M0 0h24v18h-9l-3 5-3-5H0z" fill="#fff" />
          <path d="M5 5h14M5 9h14M5 13h9" stroke="#0a1a24" strokeWidth="1.800" />
        </svg>
        <span className="ml-[10px] text-[20px] leading-6">英</span>
        <span className="ml-[19px] flex size-[22px] items-center justify-center bg-white text-[18px] leading-none font-bold text-[#222]">M</span>
        <div className="ml-[18px] w-[102px] pb-1 text-center text-[17.800px] leading-[24px] tracking-[-0.2px] whitespace-nowrap">
          <div>5:20 AM</div>
          <div>3/21/2016</div>
        </div>
        <div className="ml-[4px] h-[57px] w-px bg-[#4a5c66]" />
        <div className="w-[7px]" />
      </div>
    </footer>
  );
}

/* ---------- video watermarks ---------- */

function Watermarks() {
  return (
    <>
      <div className="absolute top-[10px] left-[10px] text-[24px] leading-[30px] font-medium tracking-[0.5px] text-[#5b88f5] [paint-order:stroke] [-webkit-text-stroke:3px_#1a1a2a]">全屏</div>
      <svg width="60" height="62" viewBox="0 0 60 62" className="absolute top-[76px] left-[1556px]">
        <path d="M46 12h12v42H8l-6-4" fill="none" stroke="#555" strokeWidth="2" />
        <path d="M2 12L51 2v41l-25 6-3 12-2-11-19 2z" fill="#737373" stroke="#565656" strokeWidth="1.500" />
      </svg>
      <div className="absolute top-[77px] left-[1630px] text-[48.500px] leading-[62px] font-light whitespace-nowrap text-[#4a4a4a]">云课堂</div>
      <svg width="220" height="90" viewBox="0 0 220 90" className="absolute top-[28px] left-[1696px]">
        <path d="M44 0l46 14-12 24v26l-26 18-9-6-30-18L2 36V20z" fill="#fdfdfd" fillOpacity="0.600" />
        <path d="M44 2l16 9-15 8-15-9z" fill="#1ba08c" />
        <path d="M74 7l17 9-15 9-16-9z" fill="#b9db1e" />
        <path d="M28 10l14 8-16 9-12-7z" fill="#eede10" />
        <path d="M3 22l16 9-1 13-15-7z" fill="#ec9717" />
        <path d="M44 20l17 9v18l-17 9-16-9V29z" fill="#cf0d96" />
        <path d="M28 29l16 9v18l-16-9z" fill="#930f8c" />
        <path d="M62 29l15-8v16l-15 8z" fill="#8fdc32" />
        <path d="M12 38l16 9v17l-15-8z" fill="#450a8d" />
        <path d="M28 48l15 9v17l-15-10z" fill="#1b66b2" />
        <path d="M61 47l16-8v18l-16 9z" fill="#df0b22" />
        <path d="M51 64l15-4 1 13-15 9z" fill="#1ea9e4" />
        <g fill="#0a0a0a" stroke="#fafafa" strokeWidth="3" paintOrder="stroke" fontFamily="Lato, sans-serif" fontWeight="700">
          <text x="78" y="81" fontSize="78" textLength="40" lengthAdjust="spacingAndGlyphs">P</text>
          <text x="118" y="47" fontSize="16" textLength="43" lengthAdjust="spacingAndGlyphs">OWER</text>
          <text x="107" y="81" fontSize="38" textLength="11" lengthAdjust="spacingAndGlyphs">I</text>
          <text x="117" y="81" fontSize="38" textLength="31" lengthAdjust="spacingAndGlyphs">V</text>
          <text x="172" y="81" fontSize="38" textLength="25" lengthAdjust="spacingAndGlyphs">T</text>
        </g>
        <path d="M147 69c0-17 26-17 26 0" fill="none" stroke="#0a0a0a" strokeWidth="6" />
        <text x="144" y="81" fontSize="13" fill="#0a0a0a" fontFamily="Noto Sans CJK SC, sans-serif" fontWeight="500" textLength="31">工坊</text>
      </svg>
    </>
  );
}

export default function App() {
  return (
    <div
      className="relative h-[1080px] w-[1920px] overflow-hidden bg-[#fdfdfd] font-['Open_Sans','Noto_Sans_CJK_SC',sans-serif]"
      style={{ color: INK }}
    >
      <TitleBar />
      <Tabs />
      <Ribbon />
      <Canvas />
      <StatusBar />
      <Taskbar />
      <Watermarks />
    </div>
  );
}
